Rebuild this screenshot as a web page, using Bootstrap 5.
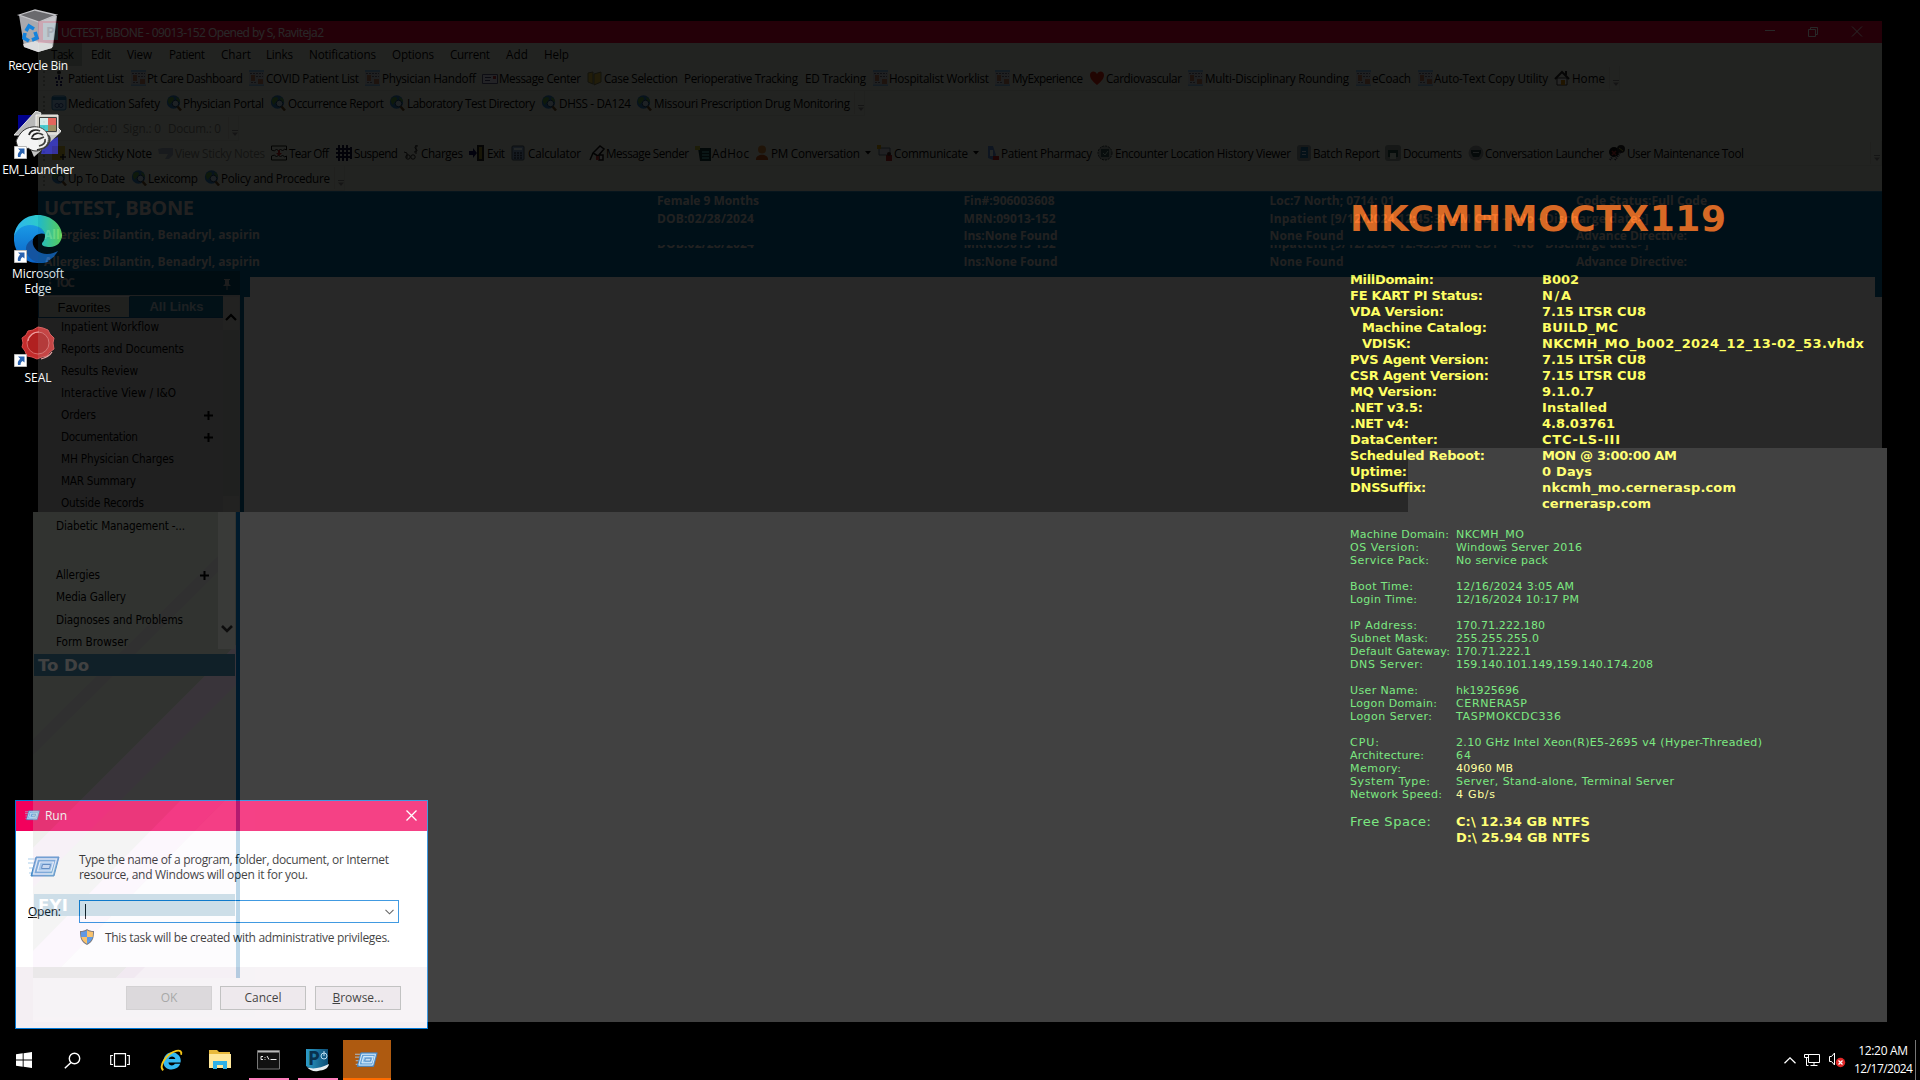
<!DOCTYPE html>
<html lang="en">
<head>
<meta charset="utf-8">
<title>Remote desktop</title>
<link href="https://cdn.jsdelivr.net/npm/bootstrap@5.3.0/dist/css/bootstrap.min.css" rel="stylesheet">
<style>
body{width:1920px;height:1080px;background:#000;overflow:hidden;font:12px/15px "Open Sans","Noto Sans",sans-serif;color:#000}
svg{display:block;flex:none}
.fit{display:block;white-space:pre;flex:none}
.layer{position:absolute}
/* desktop shortcuts */
.shortcuts{left:0;top:0;width:76px;color:#fff;text-align:center;text-shadow:0 1px 2px #000}
.shortcut{height:104px;padding-top:7px}
.shortcut .pic{height:48px;width:48px;margin-bottom:3px}
.shortcut .fit{margin:0 auto}
/* system info on the wallpaper */
.info{left:1350px;top:197px;font-family:"DejaVu Sans",sans-serif}
.hostname{font-size:36px;line-height:44px;font-weight:bold;color:#ff6a10;margin-bottom:31px}
.yrow{height:16px;line-height:16px;font-size:13px;font-weight:bold;color:#ffff48}
.yrow .key{width:192px}
.yrow .sub{padding-left:12px}
.grow{height:13px;line-height:13px;font-size:11px;color:#50e058}
.grow .key,.frow .key{width:106px}
.greens{margin-top:16px}
.pale{color:#ffff80}
.frow{height:16px;line-height:16px;font-size:13px;color:#50e058}
.frow.first{margin-top:13px}
.frow b{color:#ffff48}
/* run dialog */
.run{left:15px;top:800px;width:413px;height:229px;border:1px solid #0078d7;background:#fff}
.run-title{height:30px;background:#f2005c;color:#fff;padding:0 10px 1px 9px}
.run-title .fit{margin-left:5px}
.run-body{height:136px;padding:21px 12px 0 12px}
.run-copy{margin-left:19px}
.run-open{margin-top:18px}
.run-open .lbl{width:51px}
.run-admin{margin:6px 0 0 52px}
.run-admin .fit{margin-left:11px}
.run-foot{height:61px;background:#f4eff3;padding:19px 26px 0 0;gap:8px}
.run-btn{width:86px;height:24px;border:1px solid #adadad;background:#e9e2e7;border-radius:0;padding:0;font-size:12px;line-height:21px;color:#000}
.run-btn.off{background:#d0cdd0;border-color:#c4c2c4;color:#8a8a8a}
.run-btn:last-child{margin-left:1px}
.run-input{width:320px;height:23px;border:1px solid #0078d7;background:#fff;padding:0 4px 0 5px}
.caret{width:1px;height:15px;background:#000}
/* taskbar */
.taskbar{left:0;top:1040px;width:1920px;height:40px;background:#000;color:#fff}
.task{width:48px;height:40px}
.task.w-ie{width:54px}.task.w-ex{width:44px;margin-right:2.5px}
.task.open{box-shadow:inset 0 -2px #ff7fbd;width:40px;margin:0 4.5px}
.task.now{background:#ae5a10;box-shadow:inset 0 -2px #ff6c00;width:48px}
.tray{gap:8px}
.clock{width:58px;line-height:18px}
.clock .fit{margin:0 auto}
.edge-line{width:1px;height:40px;background:#777;margin:0 4px 0 -5px}
/* translucent application windows */
.appwin{left:38px;top:21px;width:1844px;height:491px;background:#fff;opacity:.157;
  clip-path:polygon(0 0,100% 0,100% 427px,1370px 427px,1370px 100%,0 100%)}
.apptitle{height:22px;background:#e50035;color:#fff;padding:0 19px 0 5px}
.apptitle .fit{margin-left:3px}
.chrome{background:#dadfd0;font-size:11.7px}
.menubar{height:23px;padding-top:4px}
.menubar .hot{position:absolute;left:1px;top:22px;width:43px;height:23px;background:#aeb9a9}
.tools{height:25px;border-bottom:1px solid #cdd3c5;border-right:1px solid #cdd3c5;width:max-content}
.tools::before{content:"";width:2px;height:15px;margin:0 -7px 0 5px;border-left:2px dotted #a0a698}
.tools.full{width:100%}
.tail{width:10px;height:22px;border-left:1px solid #c8cec0;padding:13px 0 0 3px}
.off-text{color:#7c8078}
.patient{background:#069;color:#d8d4d0;font-weight:bold;line-height:17.5px;border-top:1px solid #2a88b8}
.pt-now{height:53px}.pt-old{height:32px;overflow:hidden}
.pt-old .pt-cols{margin-top:-10px}
.pt-cols{padding-left:6px}
.c0{width:613px}.c1,.c3{width:306.5px}.c2{width:306px}
.pt-name{font-size:20px;line-height:31px;margin-bottom:3px}
.lower-row{height:241px}
.toc{width:202px;background:#cbcbcb;margin-top:-6px;position:relative}
.toc-head{height:24px;background:#004d70;color:#b8b8b8;font-weight:bold;padding:4px 9px 0 6px}
.tabs{padding-top:1px;font:13px "Liberation Sans",sans-serif}
.tab-a{width:92px;height:22px;background:#cdd3c5;border:1px solid #0a5a90;border-top-color:#eee}
.tab-b{width:93px;height:22px;background:#106c92;color:#b8ccd8;font-weight:bold;border-bottom:1px solid #0a5a90}
.toc-list{width:185px;height:190px;padding:0 14px 0 23px;line-height:21.95px;margin-top:-1px}
.toc-list,.side-list{font-family:"DejaVu Sans Condensed","DejaVu Sans",sans-serif;font-stretch:condensed;font-size:11.7px}
.scrolls{width:16px;background:#c6c9c2;margin-top:-21px}
.scrolls .knob{height:33px;background:#d6dad0;padding:16px 0 0 2px}
.scrolls .rail{height:166px}
.scrolls .end{height:17px;background:#d6dad0}
.split{width:4px;background:#069;margin-top:20px}
.notch{position:absolute;width:10px;height:20px;background:#069;top:256px;left:202px}
.notch.r{left:1837px;width:7px}
.appwin2{left:33px;top:448px;width:1854px;height:574px;background:#fff;opacity:.255;padding-top:64px;
  clip-path:polygon(1375px 0,100% 0,100% 100%,0 100%,0 64px,1375px 64px)}
.side{width:203px;height:466px;background:#c1c8bc;position:relative}
.side .stripes{position:absolute;left:0;top:0}
.side>.z{position:relative}
.side-list{height:142px;padding:3px 0 0 23px;line-height:22.2px;width:185px}
.side-list .space{height:27px}
.side-scroll{width:17px;height:137px;background:#e0e4dc;padding:0 0 16px 3px}
.todo{height:22px;margin:0 1px;background:#3f7f9f;color:#fff;font:bold 16.5px/23px "DejaVu Sans",sans-serif;padding-left:4px}
.todo.fyi{margin-top:218px;background:#3f81a9}
.split2{width:4px;height:466px;background:#0066ad}
</style>
<script src="https://cdn.jsdelivr.net/npm/bootstrap@5.3.0/dist/js/bootstrap.bundle.min.js"></script>
</head>
<body class="position-relative">

<svg width="0" height="0" class="position-absolute">
 <defs>
  <symbol id="i-person" viewBox="0 0 16 16"><circle cx="8" cy="2.500" r="2" fill="#333"/><path d="M8 5v6M4 8h8M6 11v5M10 11v5" stroke="#226" stroke-width="2" fill="none" stroke-dasharray="2 1"/></symbol>
  <symbol id="i-dash" viewBox="0 0 16 16"><path fill="#c3cbd2" d="M0 0h15v16H0z"/><path fill="#7fb4d8" d="M0 0h15v2H0zM0 14.500h15v1.500H0z"/><path fill="#b87858" d="M2 5h4v6H2zM9 9h5v5H9z"/><path stroke="#667" stroke-dasharray="2 1" d="M1 3.500h13M7 6.500h7M2 12.500h5"/></symbol>
  <symbol id="i-mail" viewBox="0 0 16 16"><path fill="#dde" stroke="#557" d="M.5 4.500h15v9H.5z"/><path stroke="#446" d="M3 7.500h6M3 10.500h5"/><path fill="#b33" d="M11 6h3v3h-3z"/></symbol>
  <symbol id="i-case" viewBox="0 0 16 16"><path fill="#d8b840" stroke="#775" d="M1 3l5-1v12l-5-2zM7 4l7-2v10l-7 3z"/></symbol>
  <symbol id="i-heart" viewBox="0 0 16 16"><path fill="#d42010" d="M8 15C3 11 1 8 1 5c0-4 5-5 7-1 2-4 7-3 7 1 0 3-2 6-7 10z"/></symbol>
  <symbol id="i-home" viewBox="0 0 16 16"><path fill="#eee" stroke="#333" d="M3 8h10v7H3z"/><path fill="none" stroke="#222" stroke-width="2" d="M1 9l7-7 7 7M12 1v4"/><path fill="#c80" d="M7 10h4v5H7z"/></symbol>
  <symbol id="i-globe" viewBox="0 0 16 16"><circle cx="7.500" cy="7" r="6.700" fill="#2d78b8"/><path fill="#58a048" d="M3 3c3-2 5-1 5 1S5 7 4 10C2 8 1 5 3 3zM10 2c3 1 4 3 4 5l-3-1z"/><circle cx="9.500" cy="8.500" r="3.300" fill="#b8d4e4" stroke="#246" stroke-width="1"/><path stroke="#6a4a20" stroke-width="2.500" d="M11.500 11.500l3.500 4"/></symbol>
  <symbol id="i-med" viewBox="0 0 16 16"><rect x="1" y="1" width="14" height="14" rx="2" fill="#9cc4e8" stroke="#27a"/><path fill="#27a" d="M1 2h14v3H1z"/><path d="M4 10.500a2 2 0 1 0 4 0 2 2 0 1 0-4 0M8 10.500a2 2 0 1 0 4 0 2 2 0 1 0-4 0" fill="none" stroke="#359"/></symbol>
  <symbol id="i-note" viewBox="0 0 16 16"><path fill="#c8b030" d="M1 1h13v9l-4 5H1z"/><path stroke="#222" stroke-width="1.500" d="M12 9v6M9 12h6"/></symbol>
  <symbol id="i-view" viewBox="0 0 16 16"><path fill="#98a8b8" d="M4 3h11v7l-4 4H7l3-5H1L0 4z"/></symbol>
  <symbol id="i-tear" viewBox="0 0 16 16"><path fill="none" stroke="#111" d="M.5 5V1h15v4l-2-1-2 2-2-2-2 2-2-2-2 2zM.5 11v4h15v-4l-2 1-2-2-2 2-2-2-2 2-2-2z"/><path fill="#b22" d="M7 5h2v3h2l-3 3-3-3h2z"/></symbol>
  <symbol id="i-grid" viewBox="0 0 16 16"><path stroke="#113" stroke-width="2" d="M3 0v16M7 0v16M11 0v16M15 2v12M0 4h16M0 8h16M0 12h16"/></symbol>
  <symbol id="i-charge" viewBox="0 0 16 16"><path fill="none" stroke="#222" d="M0 7l3 1v5M14 1c-3-1-4 2-2 3s1 3-2 3M12 0v9"/><circle cx="4" cy="12" r="2.200" fill="none" stroke="#222"/><circle cx="9" cy="12" r="2.200" fill="none" stroke="#222"/></symbol>
  <symbol id="i-exit" viewBox="0 0 16 16"><path fill="#222" d="M8 0h7v16H8z"/><path fill="#998a30" d="M10 2h3v12h-3z"/><path fill="#115" d="M0 6h4V3l4 5-4 5v-3H0z"/></symbol>
  <symbol id="i-calc" viewBox="0 0 16 16"><rect x="2" y="1" width="12" height="14" rx="1" fill="#88a8c8" stroke="#456"/><path fill="#dee" d="M4 3h8v2H4z"/><path stroke="#345" stroke-width="1.500" stroke-dasharray="2 1" d="M4 8h8M4 10.500h8M4 13h8"/></symbol>
  <symbol id="i-send" viewBox="0 0 16 16"><path fill="#ddd" stroke="#111" stroke-width="1.500" d="M4 8l7-7 4 3-6 7zM1 15l3-7M10 10h4v5h-4z"/><path fill="#b33" d="M7 11h3v4H7z"/></symbol>
  <symbol id="i-adhoc" viewBox="0 0 16 16"><path fill="#133" d="M3 3h13v13H5z"/><path fill="#bb3" d="M0 1h5v4H0z"/><path stroke="#5aa" stroke-width="1.500" d="M7 7h7M7 10h7M7 13h7"/></symbol>
  <symbol id="i-user" viewBox="0 0 16 16"><circle cx="8" cy="4.500" r="4" fill="#c88038"/><path fill="#b85018" d="M2 15c-1-7 13-7 12 0z"/></symbol>
  <symbol id="i-comm" viewBox="0 0 16 16"><path fill="#c8cdd8" stroke="#567" d="M2 3h11v7H2z"/><path fill="#c90" d="M0 0h4v4H0z"/><path fill="#a22" d="M9 10h6v6H9z"/><circle cx="12" cy="9" r="2" fill="#422"/></symbol>
  <symbol id="i-pharm" viewBox="0 0 16 16"><path fill="#5888c8" d="M4 1h5l3 9-3 5-5-2z"/><path fill="#dee" d="M6 5h3v6H6z"/><path fill="#b22" d="M9 11h6v4H9z"/></symbol>
  <symbol id="i-disc" viewBox="0 0 16 16"><circle cx="8" cy="8" r="7" fill="#a0aaa8" stroke="#233" stroke-dasharray="2 1"/><path fill="#355" d="M4 4h8v8H4z"/><path stroke="#bdc" d="M6 8l2 2 3-4" fill="none"/></symbol>
  <symbol id="i-batch" viewBox="0 0 16 16"><rect x="1" width="14" height="16" rx="3" fill="#8a9698"/><path fill="#1c6c9c" d="M5 2h7v11H4z"/><path stroke="#cde" d="M6 6.500h4M6 9.500h4"/></symbol>
  <symbol id="i-doc" viewBox="0 0 16 16"><rect x="0" width="16" height="16" rx="3" fill="#8a9890"/><path fill="#255040" d="M3 5h10v7H3z"/><path fill="#cdc" d="M5 8h6v6H5z"/></symbol>
  <symbol id="i-conv" viewBox="0 0 16 16"><circle cx="8" cy="8" r="7.500" fill="#929c98"/><path fill="#244" d="M3 5h10v3l-2 4H5L3 8z"/><path stroke="#bcc" d="M5 7.500h6"/></symbol>
  <symbol id="i-maint" viewBox="0 0 16 16"><circle cx="5" cy="7" r="5" fill="#111"/><circle cx="12" cy="4" r="4" fill="#222"/><path stroke="#b33" stroke-width="1.500" d="M3 6l4 4M7 6l-4 4"/><path stroke="#bb4" d="M10 3l4 3"/><path stroke="#224" stroke-width="2" stroke-dasharray="1 1" d="M1 15l3-4M6 15l5-7"/></symbol>
  <symbol id="i-runbox" viewBox="0 0 32 22">
   <path d="M0 3h12M0 7h10M1 12h8M1 17h6" stroke="#a9cdec" stroke-width="1.200"/>
   <path fill="#5e9fd8" stroke="#3f83c4" stroke-width="1" d="M8 1h23l-5 19H3z"/>
   <path fill="none" stroke="#dff0fc" stroke-width="1.300" d="M9.500 3h19l-4 15H5.500z"/>
   <path fill="#8fc4ee" stroke="#e8f6ff" stroke-width="1.200" d="M12 6h13.500l-2.500 9H9.500z"/>
   <path fill="#bfdcf4" stroke="#3a78b8" d="M14.500 8.500h8l-1 4h-8z"/></symbol>
  <symbol id="i-arrow" viewBox="0 0 13 13"><path fill="#fff" stroke="#b8b8b8" d="M.5.500h12v12H.5z"/><path fill="#2a63b0" d="M4 2.500h6.500V8.500L8.600 7C7 8 6.500 9.500 6.500 11H4C3.300 8.500 4.500 6 6.200 4.800z"/></symbol>
 </defs>
</svg>

<!-- wallpaper information -->
<section class="layer info">
  <div class="hostname fit" data-w="375">NKCMHMOCTX119</div>
  <div id="yellow"></div>
  <div class="greens" id="green"></div>
  <div class="frow first d-flex"><span class="key"><span class="fit" data-w="80">Free Space:</span></span><b class="fit" data-w="133">C:\ 12.34 GB NTFS</b></div>
  <div class="frow d-flex"><span class="key"></span><b class="fit" data-w="133">D:\ 25.94 GB NTFS</b></div>
</section>

<!-- desktop shortcuts -->
<nav class="layer shortcuts">
  <div class="shortcut">
    <svg class="pic mx-auto" viewBox="0 0 48 48">
      <path fill="#a9a9ae" d="M5 8l38 1-4 31-15 5-14-5z"/><path fill="#c6c6cb" d="M25 15l17-6-4 32-14 4z"/><path fill="#6a6a6e" stroke="#c4c4c8" stroke-width="1.300" d="M5 8L21 3l21 5-17 7z"/><path fill="#e8e8ea" opacity=".8" d="M9 37l12-3 17 3v4l-14 4-14-5z"/>
      <g fill="none" stroke="#1583dc" stroke-width="3.600"><path d="M12 24l3-5 5 3M21 25l2 6-5 2M15 34l-5-3 1-5"/></g></svg>
    <div class="fit" data-w="59">Recycle Bin</div>
  </div>
  <div class="shortcut">
    <svg class="pic mx-auto" viewBox="0 0 48 48">
      <path fill="#00008c" d="M4 4h14L4 22z"/><path fill="#1c1cb0" d="M30 32l14-6v17H27z"/>
      <path fill="#b8b8b8" stroke="#e4e4e4" d="M0 24L22 0l5 2-4 10-4 12zM24 40l23-20-3-3-12 6z"/><path fill="#c4c4c4" d="M20 46l27-25-16 2-14 16z"/>
      <path fill="#d4d0c8" stroke="#f4f4f4" d="M22 4h22v19H22z"/><path fill="#fff" stroke="#222" d="M25.500 6.500h17v14h-17z"/>
      <path fill="#d8ecec" d="M26 7h8v7h-8z"/><path fill="#e85048" d="M34 7h8v7h-8z"/><path fill="#30c8d0" d="M26 14h8v6h-8z"/><path fill="#908050" d="M34 14h8v6h-8z"/>
      <path fill="#f4f4f4" stroke="#333" d="M2 30c4-9 9-13 16-14 6-1 12 1 15 6 3 6 1 12-3 15-5 4-11 4-16 0L6 44z"/>
      <path fill="none" stroke="#222" stroke-width="1.700" d="M15 24c1-5 7-6 11-4M18 26c2-4 7-5 11-2M17 27c4 2 9 1 13-1M34 24c4 4 1 10-4 13l-7 2M31 28c1 4-2 6-6 7"/>
      <use href="#i-arrow" x="0" y="35" width="13" height="13"/></svg>
    <div class="fit" data-w="71">EM_Launcher</div>
  </div>
  <div class="shortcut">
    <svg class="pic mx-auto" viewBox="0 0 48 48">
      <defs><linearGradient id="eg1"><stop offset="0" stop-color="#2fb4f0"/><stop offset=".55" stop-color="#2ccbc8"/><stop offset="1" stop-color="#6ae04c"/></linearGradient>
      <linearGradient id="eg2" x2="0" y2="1"><stop offset="0" stop-color="#1a9be6"/><stop offset="1" stop-color="#0a62c8"/></linearGradient></defs>
      <path fill="url(#eg2)" d="M0 22C1 13 9 9 15 9c9 0 15 5 16 10-6-2-13 2-13 10 0 9 8 17 17 17-3 2-7 2-11 2C10 48-1 37 0 22z"/>
      <path fill="url(#eg1)" d="M0 22C1 9 11 0 24 0s24 10 24 20c0 7-5 12-12 12-5 0-8-1-8-3s3-3 3-8c0-6-6-11-15-11C8 10 2 15 0 22z"/>
      <path fill="#1454a0" d="M19 24c-2 8 5 15 14 15 5 0 8-2 11-3-4 7-11 12-19 12-8-2-13-8-13-14 0-5 3-8 7-10z"/>
      <use href="#i-arrow" x="0" y="35" width="13" height="13"/></svg>
    <div class="fit" data-w="51">Microsoft</div><div class="fit" data-w="26">Edge</div>
  </div>
  <div class="shortcut">
    <svg class="pic mx-auto" viewBox="0 0 48 48">
      <path fill="#c42c2c" stroke="#d85050" d="M24 8l5 1 5 2 2 4 4 4-1 5 1 6-4 3-3 4-5 1-5 2-5-2-5-1-2-5-3-4 1-4-1-5 4-3 2-4 5-1z"/>
      <circle cx="24" cy="24" r="11" fill="#b02020" stroke="#d86868"/><path fill="none" stroke="#f0a0a0" stroke-width="1.200" d="M14 22c1-6 6-9 11-9M38 33c-3 5-7 6-11 7"/>
      <use href="#i-arrow" x="0" y="35" width="13" height="13"/></svg>
    <div class="fit" data-w="26">SEAL</div>
  </div>
</nav>

<!-- run dialog -->
<section class="layer run">
  <div class="run-title d-flex align-items-center">
    <svg width="15" height="11"><use href="#i-runbox"/></svg>
    <span class="fit me-auto" data-w="21">Run</span>
    <svg width="11" height="11"><path d="M.5.500l10 10M10.500.500l-10 10" stroke="#fff" stroke-width="1.300"/></svg>
  </div>
  <div class="run-body">
    <div class="d-flex">
      <svg width="32" height="22" class="mt-1"><use href="#i-runbox"/></svg>
      <div class="run-copy"><div class="fit" data-w="309">Type the name of a program, folder, document, or Internet</div><div class="fit" data-w="228">resource, and Windows will open it for you.</div></div>
    </div>
    <div class="run-open d-flex align-items-center">
      <div class="lbl"><span class="fit" data-w="32"><u>O</u>pen:</span></div>
      <div class="run-input d-flex align-items-center justify-content-between"><i class="caret"></i><svg width="9" height="6"><path d="M.5.800l4 4 4-4" fill="none" stroke="#333" stroke-width="1.100"/></svg></div>
    </div>
    <div class="run-admin d-flex align-items-center">
      <svg width="14" height="16" viewBox="0 0 14 16"><path fill="#555" d="M7 0c2 1.500 4 2 7 2 0 7-1 11-7 14C1 13 0 9 0 2c3 0 5-.5 7-2z"/><path fill="#2c7fe0" d="M7 1.300V8H1.300C1 6 1 4.500 1 3c2.500 0 4.500-.5 6-1.700zM7 8h5.700C12 11 10 13.200 7 14.800z"/><path fill="#fcb83c" d="M7 1.300V8h5.700c.3-2 .3-3.500.3-5C10.500 3 8.500 2.500 7 1.300zM7 8H1.300C2 11 4 13.200 7 14.800z"/></svg>
      <span class="fit" data-w="284">This task will be created with administrative privileges.</span>
    </div>
  </div>
  <div class="run-foot d-flex justify-content-end">
    <div class="btn run-btn off">OK</div><div class="btn run-btn">Cancel</div><div class="btn run-btn"><u>B</u>rowse...</div>
  </div>
</section>

<!-- taskbar -->
<footer class="layer taskbar d-flex">
  <div class="task d-flex align-items-center justify-content-center"><svg width="16" height="16"><path fill="#fff" d="M0 2.200L6.700 1.300V7.500H0zM7.600 1.200L16 0V7.500H7.600zM0 8.500h6.700v6.200L0 13.800zM7.600 8.500H16V16l-8.400-1.200z"/></svg></div>
  <div class="task d-flex align-items-center justify-content-center"><svg width="17" height="17"><circle cx="10.500" cy="6.500" r="5.200" fill="none" stroke="#fff" stroke-width="1.400"/><path d="M7 10.500L.8 16.300" stroke="#fff" stroke-width="1.500"/></svg></div>
  <div class="task d-flex align-items-center justify-content-center"><svg width="20" height="14"><path fill="none" stroke="#fff" stroke-width="1.200" d="M4.500.6h11v12.800h-11zM3 2.500H.7v9H3M17 2.500h2.300v9H17"/></svg></div>
  <div class="task w-ie d-flex align-items-center justify-content-center"><svg width="23" height="23" viewBox="0 0 24 24"><path fill="#35b8f0" d="M12.500 3.500A9 9 0 0 1 21.500 14H8.800c.4 3.500 5 4.200 6.700 1.500h5.600c-3 8.500-18 8-17.600-2.500.2-5 4-9.500 9-9.500zM9 10.500h7c-.5-3.600-6.300-3.600-7 0z"/><path fill="none" stroke="#f5c518" stroke-width="2" d="M3.500 22C-2 19 6 5 17 2c4-1 6 .5 5 4"/></svg></div>
  <div class="task w-ex d-flex align-items-center justify-content-center"><svg width="22" height="20"><path fill="#e8b93c" d="M0 0h8l2 2h11v4H0z"/><path fill="#ffe79a" d="M0 4h22v14H0z"/><path fill="#2eb0e8" d="M4 19v-8h14v8h-4v-4H8v4z"/></svg></div>
  <div class="task open d-flex align-items-center justify-content-center"><svg width="24" height="20"><path fill="#111" stroke="#777" d="M.5.500h22v18.500H.5z"/><path fill="#bbb" d="M1 1h21v1.500H1z"/><path fill="none" stroke="#eee" d="M6 6.500H4v3h2M8 7v.8M8 9v.8M10 6l2 3.500M13.500 9.500h6"/></svg></div>
  <div class="task open d-flex align-items-center justify-content-center"><svg width="24" height="24"><defs><linearGradient id="pg"><stop offset="0" stop-color="#2c9cc8"/><stop offset="1" stop-color="#0c4c74"/></linearGradient></defs><path fill="url(#pg)" d="M0 1h22v16c-1 3-4 4-8 4H5l-5-3z"/><path fill="#e8eef2" d="M1 19c5 3 14 1 22-3-1 5-5 6-11 7-4 1-9-1-11-4z"/><text x="2" y="17" font-family="Open Sans" font-weight="bold" font-size="19" fill="#08314e">P</text><circle cx="18" cy="8" r="3" fill="none" stroke="#b8dcf0"/><path d="M18 3v5" stroke="#b8dcf0"/></svg></div>
  <div class="task now d-flex align-items-center justify-content-center"><svg width="23" height="16"><use href="#i-runbox"/></svg></div>
  <div class="tray ms-auto d-flex align-items-center">
    <svg width="12" height="7"><path d="M.5 6.300L6 .9l5.500 5.400" fill="none" stroke="#fff" stroke-width="1.300"/></svg>
    <svg width="17" height="14"><path fill="none" stroke="#fff" d="M4.500 1.500h11v8h-11zM10 9.500v3M6.500 12.500h7M.5 1.500h4v3h-4zM2.500 4.500v8h2"/></svg>
    <svg width="17" height="16"><path fill="none" stroke="#fff" d="M.5 4.500h2l3-3.500v12l-3-3.500h-2z"/><circle cx="11.500" cy="10.500" r="4.700" fill="#e02828"/><path stroke="#fff" stroke-width="1.200" d="M9.500 8.500l4 4M13.500 8.500l-4 4"/></svg>
    <div class="clock d-flex flex-column"><div class="fit" data-w="49">12:20 AM</div><div class="fit" data-w="58">12/17/2024</div></div>
    <i class="edge-line"></i>
  </div>
</footer>

<!-- upper application window -->
<main class="layer appwin">
  <header class="apptitle d-flex align-items-center">
    <svg width="15" height="18"><path fill="#8fd0e4" d="M0 0h15v17H0z"/><text x="3" y="14" font-family="Open Sans" font-weight="bold" font-size="14" fill="#063050">P</text></svg>
    <span class="fit me-auto" data-w="262">UCTEST, BBONE - 09013-152 Opened by S, Raviteja2</span>
    <svg width="98" height="12"><path fill="none" stroke="#fff" d="M0 4.500h10M43.500 3.500h7v7h-7zM45.500 3.500v-2h7v7h-2M87 .500l10 10M97 .500l-10 10"/></svg>
  </header>
  <div class="chrome">
    <div class="menubar d-flex" id="menu"><span class="hot"></span></div>
    <div class="tools d-flex align-items-center" id="t1"></div>
    <div class="tools d-flex align-items-center" id="t2"></div>
    <div class="tools d-flex align-items-center off-text" id="t3"></div>
    <div class="tools full d-flex align-items-center" id="t4"></div>
    <div class="tools d-flex align-items-center" id="t5"></div>
  </div>
  <div class="patient">
    <div class="pt-now pt-cols d-flex">
      <div class="c0"><div class="pt-name fit" data-w="149">UCTEST, BBONE</div><div class="fit" data-w="215">Allergies: Dilantin, Benadryl, aspirin</div></div>
      <div class="c1"><div class="fit" data-w="101">Female 9 Months</div><div class="fit" data-w="96">DOB:02/28/2024</div></div>
      <div class="c2"><div class="fit" data-w="90">Fin#:906003608</div><div class="fit" data-w="91">MRN:09013-152</div><div class="fit" data-w="93">Ins:None Found</div></div>
      <div class="c3"><div class="fit" data-w="124">Loc:7 North; 0714; 01</div><div class="fit" data-w="378">Inpatient [9/12/2024 12:45:30 AM CDT - &lt;No - Discharge date&gt;]</div><div class="fit" data-w="73">None Found</div></div>
      <div><div class="fit" data-w="130">Code Status:Full Code</div><div>&nbsp;</div><div class="fit" data-w="110">Advance Directive:</div></div>
    </div>
    <div class="pt-old"><div class="pt-cols d-flex">
      <div class="c0"><div>&nbsp;</div><div class="fit" data-w="215">Allergies: Dilantin, Benadryl, aspirin</div></div>
      <div class="c1"><div class="fit" data-w="96">DOB:02/28/2024</div></div>
      <div class="c2"><div class="fit" data-w="91">MRN:09013-152</div><div class="fit" data-w="93">Ins:None Found</div></div>
      <div class="c3"><div class="fit" data-w="378">Inpatient [9/12/2024 12:45:30 AM CDT - &lt;No - Discharge date&gt;]</div><div class="fit" data-w="73">None Found</div></div>
      <div><div>&nbsp;</div><div class="fit" data-w="110">Advance Directive:</div></div>
    </div></div>
  </div>
  <div class="lower-row d-flex">
    <aside class="toc">
      <div class="toc-head d-flex justify-content-between"><span class="fit" data-w="30">⋮ TOC</span><svg width="8" height="12" class="mt-1"><path fill="#b8b8b8" d="M1 0h6v1H6v4l2 2H0l2-2V1H1zM3.500 7h1v4h-1z"/></svg></div>
      <div class="tabs d-flex">
        <div class="tab-a d-flex align-items-center justify-content-center"><span class="fit" data-w="52">Favorites</span></div>
        <div class="tab-b d-flex align-items-center justify-content-center"><span class="fit" data-w="53">All Links</span></div>
      </div>
      <div class="d-flex">
        <div class="toc-list" id="toc"></div>
        <div class="scrolls"><div class="knob"><svg width="12" height="9"><path d="M1 7l5-5 5 5" fill="none" stroke="#000" stroke-width="2.200"/></svg></div><div class="rail"></div><div class="end"></div></div>
      </div>
    </aside>
    <div class="split"></div>
  </div>
  <i class="notch"></i><i class="notch r"></i>
</main>

<!-- lower application window -->
<section class="layer appwin2 d-flex">
  <aside class="side">
    <svg class="stripes" width="203" height="466">
      <path fill="#bdbdbd" d="M0 227L185 44V60L0 243z"/>
      <path fill="#d8d8d8" d="M203 133L0 336v130h203z"/>
      <path fill="#e0cbe2" d="M203 133v40L0 376v-40z"/>
      <path fill="#d8d8d8" d="M87 288L0 376v66L154 288z"/>
      <path fill="#f6e2fa" d="M148 288h44L28 455H0v-16z"/>
      <path fill="#faf4fc" d="M192 288h11v178H28v-11z"/>
      <path fill="#d0d4ce" d="M0 455h94l-11 11H0z"/><path fill="#ead8ee" d="M94 455h18l-11 11H83z"/>
    </svg>
    <div class="z d-flex">
      <div class="side-list" id="side"></div>
      <div class="side-scroll d-flex align-items-end"><svg width="12" height="9"><path d="M1 2l5 5 5-5" fill="none" stroke="#333" stroke-width="2.600"/></svg></div>
    </div>
    <div class="z todo"><span class="fit" data-w="50">To Do</span></div>
    <div class="z todo fyi"><span class="fit" data-w="29">FYI</span></div>
  </aside>
  <div class="split2"></div>
</section>

<script>
const el = (html) => { const t = document.createElement('template'); t.innerHTML = html; return t.content; };
const left = 38; // window's left edge

// [icon, start, label start, label end, label, flags]: flags a = drop arrow, d = disabled
const bars = {
  t1: [['person',51,68,123,'Patient List'],['dash',131,147,242,'Pt Care Dashboard'],['dash',249,266,358,'COVID Patient List'],['dash',365,382,475,'Physician Handoff'],['mail',482,499,580,'Message Center'],['case',587,604,677,'Case Selection'],['',684,684,797,'Perioperative Tracking'],['',805,805,865,'ED Tracking'],['dash',873,889,988,'Hospitalist Worklist'],['dash',995,1012,1082,'MyExperience'],['heart',1089,1106,1181,'Cardiovascular'],['dash',1188,1205,1348,'Multi-Disciplinary Rounding'],['dash',1356,1372,1410,'eCoach'],['dash',1418,1434,1547,'Auto-Text Copy Utility'],['home',1554,1572,1604,'Home']],
  t2: [['med',51,68,159,'Medication Safety'],['globe',166,183,263,'Physician Portal'],['globe',270,288,383,'Occurrence Report'],['globe',389,407,534,'Laboratory Test Directory'],['globe',541,559,630,'DHSS - DA124'],['globe',636,654,849,'Missouri Prescription Drug Monitoring']],
  t3: [['',73,73,116,'Order.: 0'],['',123,123,160,'Sign.: 0'],['',168,168,220,'Docum.: 0']],
  t4: [['note',51,68,151,'New Sticky Note'],['view',158,175,264,'View Sticky Notes','d'],['tear',271,289,328,'Tear Off'],['grid',336,354,397,'Suspend'],['charge',404,421,462,'Charges'],['exit',469,487,504,'Exit'],['calc',510,528,580,'Calculator'],['send',589,606,688,'Message Sender'],['adhoc',695,712,748,'AdHoc'],['user',754,771,859,'PM Conversation','a'],['comm',877,894,967,'Communicate','a'],['pharm',984,1001,1091,'Patient Pharmacy'],['disc',1097,1115,1290,'Encounter Location History Viewer'],['batch',1296,1313,1379,'Batch Report'],['doc',1385,1403,1461,'Documents'],['conv',1468,1485,1603,'Conversation Launcher'],['maint',1609,1627,1743,'User Maintenance Tool']],
  t5: [['globe',51,68,124,'Up To Date'],['globe',131,148,197,'Lexicomp'],['globe',204,221,329,'Policy and Procedure']]
};
for (const id in bars) {
  const bar = document.getElementById(id);
  let x = left, html = '';
  for (const [icon, a, b, c, label, flag] of bars[id]) {
    html += `<div class="d-flex align-items-center" style="margin-left:${a - x}px;width:${c - a}px">` +
      (icon ? `<svg width="16" height="16" style="margin-right:${b - a - 16}px"><use href="#i-${icon}"/></svg>` : '') +
      `<span class="fit ${flag === 'd' ? 'off-text' : ''}" data-w="${c - b}">${label}</span></div>`;
    x = c;
    if (flag === 'a') { html += '<svg width="6" height="4" style="margin-left:6px"><path d="M0 0h6L3 3.500z"/></svg>'; x += 12; }
  }
  const gap = id === 't4' ? 1870 - x : 5;
  html += `<div class="tail" style="margin-left:${id === 't3' ? 8 : gap}px"><svg width="6" height="7"><path fill="#888" d="M0 0h6v1H0zM0 2.500h6L3 6z"/></svg></div>`;
  bar.append(el(html));
}

let mx = left, mh = '';
for (const [a, b, label] of [[51,73,'Task'],[91,110,'Edit'],[127,151,'View'],[169,204,'Patient'],[221,250,'Chart'],[266,292,'Links'],[309,375,'Notifications'],[392,433,'Options'],[450,489,'Current'],[506,527,'Add'],[544,568,'Help']]) {
  mh += `<span class="fit position-relative" style="margin-left:${a - mx}px;width:${b - a}px" data-w="${b - a}">${label}</span>`; mx = b;
}
document.getElementById('menu').append(el(mh));

const plus = '<svg width="9" height="9"><path d="M4.500 0v9M0 4.500h9" stroke="#000" stroke-width="2"/></svg>';
for (const [w, label, more] of [[97,'Inpatient Workflow'],[122,'Reports and Documents'],[76,'Results Review'],[114,'Interactive View / I&amp;O'],[34,'Orders',1],[76,'Documentation',1],[112,'MH Physician Charges'],[74,'MAR Summary'],[82,'Outside Records']])
  document.getElementById('toc').append(el(`<div class="d-flex align-items-center" style="width:152px"><span class="fit me-auto" data-w="${w}">${label}</span>${more ? plus : ''}</div>`));
for (const [w, label, more] of [[128,'Diabetic Management -...'],[0,''],[43,'Allergies',1],[69,'Media Gallery'],[126,'Diagnoses and Problems'],[71,'Form Browser']])
  document.getElementById('side').append(el(label ? `<div class="d-flex align-items-center" style="width:153px"><span class="fit me-auto" data-w="${w}">${label}</span>${more ? plus : ''}</div>` : '<div class="space"></div>'));

for (const [k, kw, v, vw, sub] of [['MillDomain:',83,'B002',36],['FE KART PI Status:',132,'N/A',28],['VDA Version:',93,'7.15 LTSR CU8',103],['Machine Catalog:',124,'BUILD_MC',75,1],['VDISK:',48,'NKCMH_MO_b002_2024_12_13-02_53.vhdx',321,1],['PVS Agent Version:',138,'7.15 LTSR CU8',103],['CSR Agent Version:',138,'7.15 LTSR CU8',103],['MQ Version:',86,'9.1.0.7',51],['.NET v3.5:',72,'Installed',64],['.NET v4:',58,'4.8.03761',72],['DataCenter:',87,'CTC-LS-III',77],['Scheduled Reboot:',134,'MON @ 3:00:00 AM',134],['Uptime:',56,'0 Days',49],['DNSSuffix:',74,'nkcmh_mo.cernerasp.com',193],['',0,'cernerasp.com',108]])
  document.getElementById('yellow').append(el(`<div class="yrow d-flex"><span class="key ${sub ? 'sub' : ''}"><span class="fit" data-w="${kw}">${k}</span></span><span class="fit" data-w="${vw}">${v}</span></div>`));
for (const r of [['Machine Domain:',98,'NKCMH_MO',67],['OS Version:',68,'Windows Server 2016',125],['Service Pack:',78,'No service pack',91],0,['Boot Time:',62,'12/16/2024 3:05 AM',117],['Login Time:',66,'12/16/2024 10:17 PM',122],0,['IP Address:',66,'170.71.222.180',88],['Subnet Mask:',77,'255.255.255.0',82],['Default Gateway:',99,'170.71.222.1',74],['DNS Server:',72,'159.140.101.149,159.140.174.208',196],0,['User Name:',67,'hk1925696',62],['Logon Domain:',86,'CERNERASP',70],['Logon Server:',81,'TASPMOKCDC336',104],0,['CPU:',28,'2.10 GHz Intel Xeon(R)E5-2695 v4 (Hyper-Threaded)',305],['Architecture:',73,'64',14],['Memory:',50,'40960 MB',56,1],['System Type:',79,'Server, Stand-alone, Terminal Server',217],['Network Speed:',91,'4 Gb/s',38,1]])
  document.getElementById('green').append(el(r ? `<div class="grow d-flex"><span class="key"><span class="fit" data-w="${r[1]}">${r[0]}</span></span><span class="fit ${r[4] ? 'pale' : ''}" data-w="${r[3]}">${r[2]}</span></div>` : '<div class="grow"></div>'));

document.querySelectorAll('.fit[data-w]').forEach(n => {
  const range = document.createRange(); range.selectNodeContents(n);
  const w = +n.dataset.w, len = n.textContent.length;
  if (!w || len < 2) return;
  n.style.letterSpacing = ((w + 1 - range.getBoundingClientRect().width) / (len - 1)).toFixed(3) + 'px';
});
</script>
</body>
</html>
